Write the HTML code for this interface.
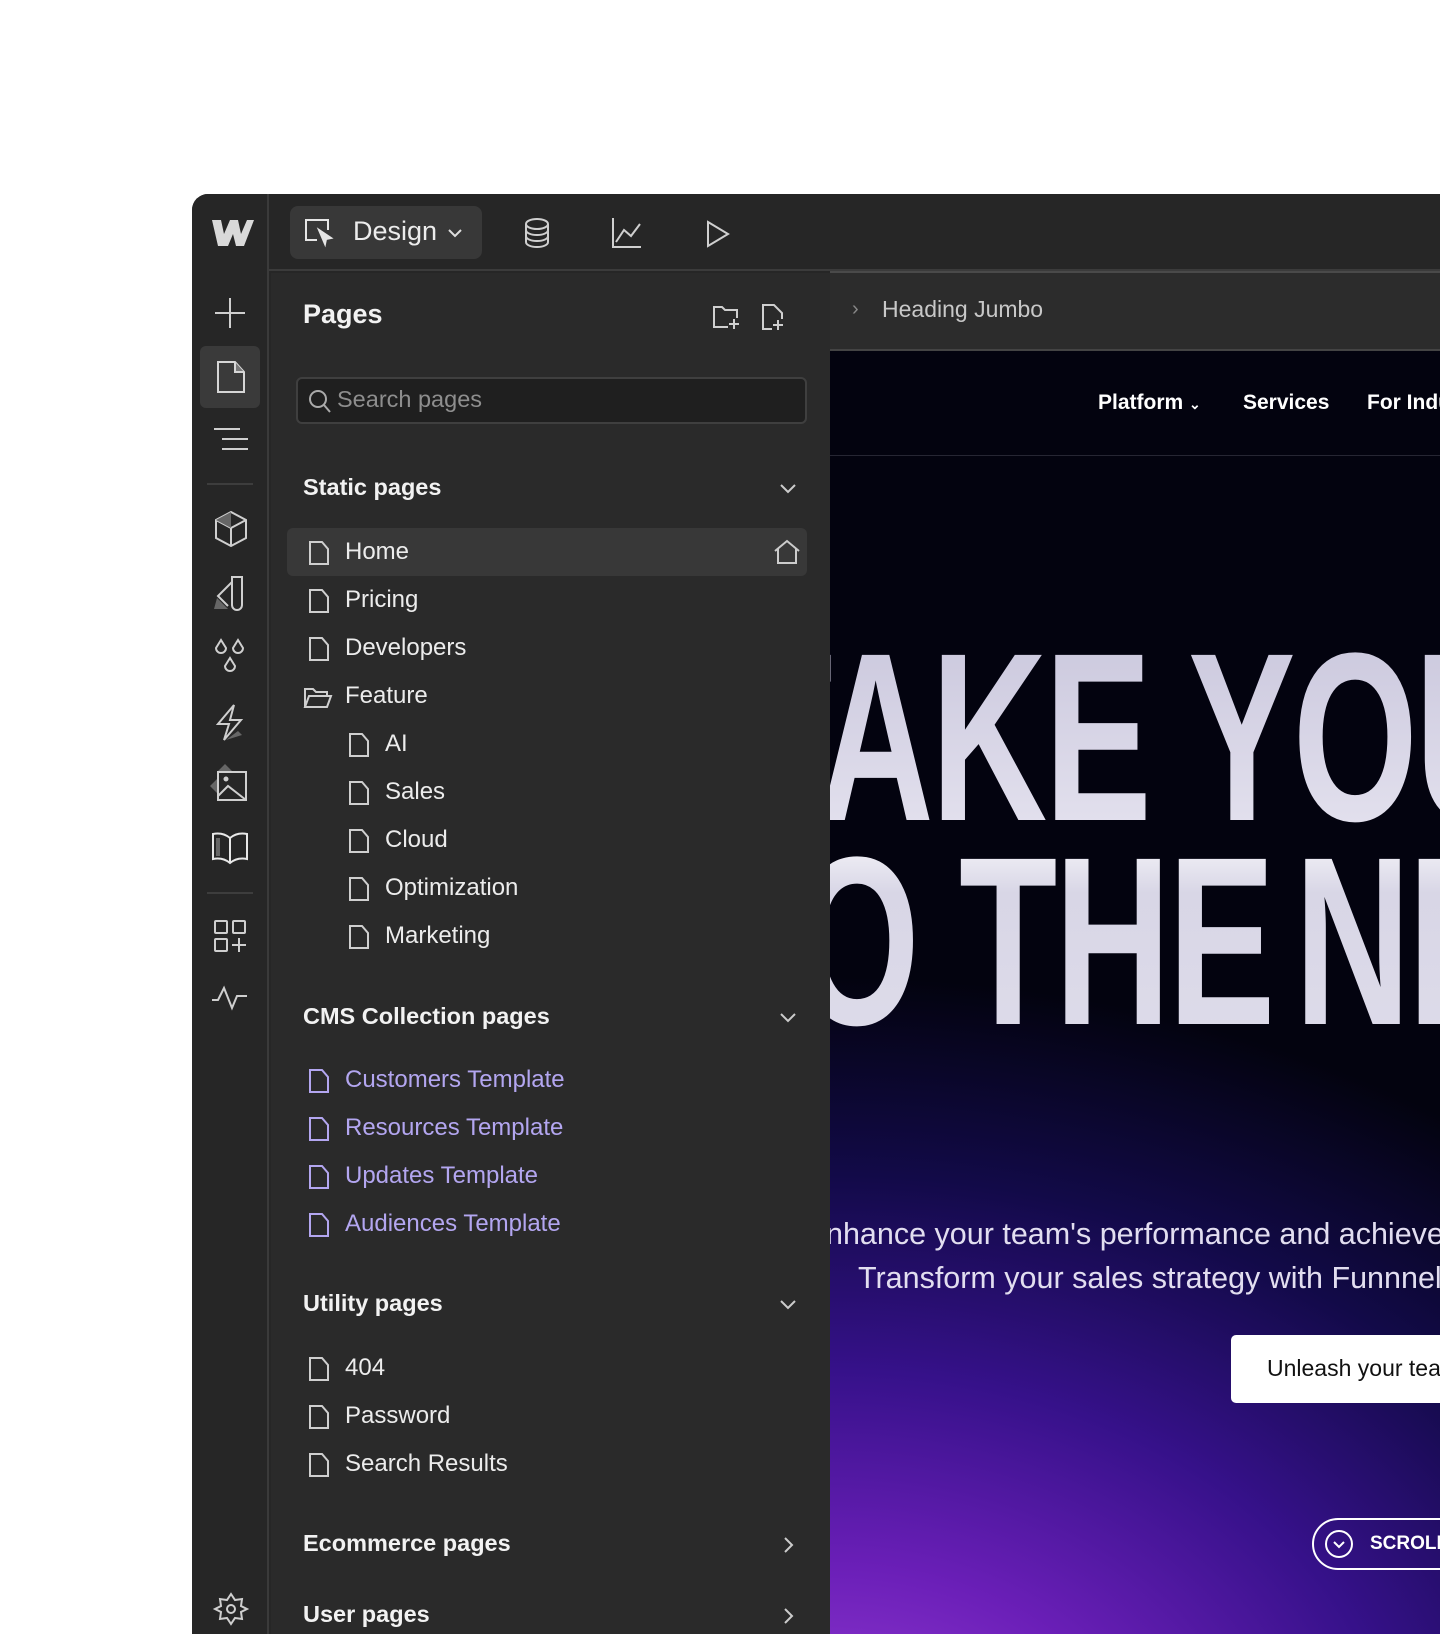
<!DOCTYPE html>
<html><head><meta charset="utf-8"><style>
*{margin:0;padding:0;box-sizing:border-box}
body{width:1440px;height:1621px;background:#fff;position:relative;overflow:hidden;font-family:"Liberation Sans",sans-serif}
.frame{position:absolute;left:192px;top:194px;width:1260px;height:1440px;background:#262626;border-radius:16px 0 0 0;overflow:hidden}
.abs{position:absolute}
.rail{position:absolute;left:0;top:0;width:77px;height:100%;background:#262626;border-right:2px solid #3a3a3a}
.topbar{position:absolute;left:77px;top:0;right:0;height:77px;background:#262626;border-bottom:2px solid #3b3b3b}
.panel{position:absolute;left:79px;top:79px;width:559px;height:1400px;background:#2a2a2a}
.preview{position:absolute;left:638px;top:77px;right:0;bottom:0;overflow:hidden;background:#03030f}
svg{position:absolute;overflow:visible}
.t{position:absolute;color:#ececec;font-size:24px;white-space:nowrap}
.h{position:absolute;color:#f2f2f2;font-size:23.5px;font-weight:bold;white-space:nowrap}
</style></head><body>
<div class="frame">
 <div class="rail">
  <svg style="left:22px;top:103px" width="32" height="32" fill="none" stroke="#cfcfcf" stroke-width="2"><path d="M16 1v30M1 16h30"/></svg>
  <div class="abs" style="left:8px;top:152px;width:60px;height:62px;background:#3a3a3a;border-radius:6px"></div>
  <svg style="left:24px;top:166px" width="30" height="34" fill="none" stroke="#d6d6d6" stroke-width="2"><path d="M2 2h17l9 10v20H2z"/><path d="M19 2v10h9" fill="#777"/></svg>
  <svg style="left:22px;top:234px" width="36" height="22" fill="none" stroke="#cfcfcf" stroke-width="2"><path d="M0 1h26M8 11h26M8 21h26"/></svg>
  <div class="abs" style="left:15px;top:289px;width:46px;height:2px;background:#3d3d3d"></div>
  <svg style="left:22px;top:317px" width="34" height="36" fill="none" stroke="#cfcfcf" stroke-width="2"><path d="M17 1L32 9v18L17 35 2 27V9zM2 9l15 8 15-8M17 17v18"/><path d="M2 9l15 8v-16z" fill="#666" stroke="none"/></svg>
  <svg style="left:22px;top:380px" width="34" height="36" fill="none" stroke="#cfcfcf" stroke-width="2"><path d="M18 3h10v28a4 4 0 0 1-10 0z"/><path d="M18 8L4 22l10 10" /><path d="M0 35h14L3 24z" fill="#666" stroke="none"/></svg>
  <svg style="left:21px;top:445px" width="34" height="36" fill="none" stroke="#cfcfcf" stroke-width="2"><path d="M8 1l5 8a5 5 0 1 1-10 0zM25 1l5 8a5 5 0 1 1-10 0zM17 19l5 8a5 5 0 1 1-10 0z"/></svg>
  <svg style="left:22px;top:510px" width="34" height="38" fill="none" stroke="#cfcfcf" stroke-width="2"><path d="M20 1L4 20h11l-5 16 17-20H16z"/><path d="M12 36l16-5-4-4z" fill="#666" stroke="none"/></svg>
  <svg style="left:18px;top:570px" width="38" height="38" fill="none" stroke="#cfcfcf" stroke-width="2"><rect x="8" y="8" width="28" height="28"/><path d="M8 32l10-10 18 14"/><circle cx="16" cy="15" r="1.5" fill="#cfcfcf"/><path d="M0 22l7-7v14zM15 0l7 7H8z" fill="#666" stroke="none"/></svg>
  <svg style="left:20px;top:638px" width="36" height="32" fill="none" stroke="#e8e8e8" stroke-width="2"><path d="M18 6C12 1 6 1 1 2v25c5-1 11-1 17 4 6-5 12-5 17-4V2c-5-1-11-1-17 4zM18 6v25"/><rect x="4" y="6" width="4" height="18" fill="#666" stroke="none"/></svg>
  <div class="abs" style="left:15px;top:698px;width:46px;height:2px;background:#3d3d3d"></div>
  <svg style="left:22px;top:726px" width="32" height="32" fill="none" stroke="#cfcfcf" stroke-width="2"><rect x="1" y="1" width="12" height="12" rx="1"/><rect x="19" y="1" width="12" height="12" rx="1"/><rect x="1" y="19" width="12" height="12" rx="1"/><path d="M25 18v14M18 25h14"/></svg>
  <svg style="left:20px;top:792px" width="36" height="24" fill="none" stroke="#cfcfcf" stroke-width="2"><path d="M0 14h6l6-12 8 20 5-12h10"/></svg>
  <svg style="left:22px;top:1398px" width="34" height="34" fill="none" stroke="#cfcfcf" stroke-width="2"><path d="M17 2l4 6 7-1-1 7 6 3-6 3 1 7-7-1-4 6-4-6-7 1 1-7-6-3 6-3-1-7 7 1z"/><circle cx="17" cy="17" r="4"/></svg>
  <svg style="left:20px;top:26px" width="42" height="26"><path d="M0 0h9l3 14 6-14h8l3 14 6-14h7l-10 26h-8l-3-12-5 12H6z" fill="#d9d9d9"/></svg>
 </div>
 <div class="topbar">
  <div class="abs" style="left:21px;top:12px;width:192px;height:53px;background:#383838;border-radius:8px"></div>
  <svg style="left:35px;top:24px" width="32" height="30" fill="none" stroke="#e6e6e6" stroke-width="2"><path d="M13 22H2V2h22v10"/><path d="M15 12l12 8-5 1-1 5z" fill="#e6e6e6"/></svg>
  <div class="t" style="left:84px;top:22px;font-size:27px;color:#ececec">Design</div>
  <svg style="left:179px;top:35px" width="14" height="9" fill="none" stroke="#ddd" stroke-width="2"><path d="M1 1l6 6 6-6"/></svg>
  <svg style="left:255px;top:24px" width="26" height="30" fill="none" stroke="#cfcfcf" stroke-width="2"><ellipse cx="13" cy="6" rx="11" ry="5"/><path d="M2 6v18c0 3 5 5 11 5s11-2 11-5V6M2 12c0 3 5 5 11 5s11-2 11-5M2 18c0 3 5 5 11 5s11-2 11-5"/></svg>
  <svg style="left:343px;top:24px" width="30" height="30" fill="none" stroke="#cfcfcf" stroke-width="2"><path d="M1 0v29h28M4 24l8-12 7 6 9-12"/></svg>
  <svg style="left:437px;top:26px" width="24" height="28" fill="none" stroke="#cfcfcf" stroke-width="2"><path d="M2 2l20 12L2 26z"/></svg>
 </div>
 <div class="panel">
  <div class="h" style="left:32px;top:26px;font-size:27px">Pages</div>
  <svg style="left:442px;top:33px" width="28" height="24" fill="none" stroke="#cfcfcf" stroke-width="2"><path d="M15 21H1V1h8l3 3h12v8"/><path d="M21 13v10M16 18h10"/></svg>
  <svg style="left:491px;top:31px" width="24" height="28" fill="none" stroke="#cfcfcf" stroke-width="2"><path d="M10 25H1V1h11l8 8v6"/><path d="M16 16v10M11 21h10"/></svg>
  <div class="abs" style="left:25px;top:104px;width:511px;height:47px;border:2px solid #3f3f3f;border-radius:6px;background:#1f1f1f"></div>
  <svg style="left:38px;top:117px" width="22" height="24" fill="none" stroke="#aaa" stroke-width="2"><circle cx="9" cy="9" r="8"/><path d="M15 15l6 7"/></svg>
  <div class="t" style="left:66px;top:113px;color:#8e8e8e;font-size:23.5px">Search pages</div>
  <div class="abs" style="left:16px;top:255px;width:520px;height:48px;background:#383838;border-radius:6px"></div>
  <svg style="left:502px;top:266px" width="28" height="26" fill="none" stroke="#ccc" stroke-width="2"><path d="M2 12L14 2l12 10M5 10v14h18V10"/></svg>
  <div id="items"></div>
 </div>
 <div class="preview">
  <div class="abs" style="left:0;top:0;width:100%;height:100%;background:radial-gradient(ellipse 1100px 820px at 0% 112%,#a044dc 0%,#6b1fb8 28%,#36118a 52%,#120a48 76%,rgba(3,3,15,0) 100%)"></div>
  <div class="abs" style="left:0;top:0;width:100%;height:80px;background:#2c2c2c;border-top:2px solid #4a4a4a;border-bottom:2px solid #444"></div>
  <div class="t" style="left:22px;top:27px;color:#888;font-size:20px">›</div>
  <div class="t" style="left:52px;top:25px;color:#c8c8c8;font-size:23px">Heading Jumbo</div>
  <div class="abs" style="left:0;top:184px;width:100%;height:1px;background:#262633"></div>
  <div class="t" style="left:268px;top:120px;font-size:21px;font-weight:bold;color:#fff">Platform <span style="font-size:14px">⌄</span></div>
  <div class="t" style="left:413px;top:120px;font-size:21px;font-weight:bold;color:#fff">Services</div>
  <div class="t" style="left:537px;top:120px;font-size:21px;font-weight:bold;color:#fff">For Industries</div>
  <div class="abs" style="left:-96px;top:346px;font-size:240px;line-height:240px;font-weight:bold;letter-spacing:-4px;transform:scaleX(0.67);transform-origin:0 0;white-space:nowrap;background:linear-gradient(#c9c6dc,#e6e4f0);-webkit-background-clip:text;color:transparent">TAKE YOUR</div>
  <div class="abs" style="left:-128px;top:550px;font-size:240px;line-height:240px;font-weight:bold;letter-spacing:-4px;transform:scaleX(0.67);transform-origin:0 0;white-space:nowrap;background:linear-gradient(#ffffff 0%,#d8d6e6 30%,#dedcea 100%);-webkit-background-clip:text;color:transparent">TO THE <span style="margin-left:-30px">NEXT</span></div>
  <div class="t" style="left:-4px;top:946px;font-size:30.5px;color:#e2def0">nhance your team's performance and achieve</div>
  <div class="t" style="left:28px;top:990px;font-size:30.5px;color:#e2def0">Transform your sales strategy with Funnnel</div>
  <div class="abs" style="left:401px;top:1064px;width:260px;height:68px;background:#fff;border-radius:5px"></div>
  <div class="t" style="left:437px;top:1084px;font-size:23px;color:#111">Unleash your team</div>
  <div class="abs" style="left:482px;top:1247px;width:240px;height:52px;border:2px solid #fff;border-radius:26px"></div>
  <svg style="left:494px;top:1258px" width="30" height="30" fill="none" stroke="#fff" stroke-width="2"><circle cx="15" cy="15" r="13"/><path d="M10 13l5 5 5-5"/></svg>
  <div class="t" style="left:540px;top:1262px;font-size:19px;font-weight:bold;color:#fff">SCROLL</div>
 </div>
</div>
<script>
var items=[
["Home",552,0,0],["Pricing",600,0,0],["Developers",648,0,0],["Feature",696,0,2],["AI",744,1,0],["Sales",792,1,0],["Cloud",840,1,0],["Optimization",888,1,0],["Marketing",936,1,0],
["Customers Template",1080,0,1],["Resources Template",1128,0,1],["Updates Template",1176,0,1],["Audiences Template",1224,0,1],
["404",1368,0,0],["Password",1416,0,0],["Search Results",1464,0,0]];
function Y(v){return v-272;}
var h='';
items.forEach(function(it){
 var y=Y(it[1]), x=it[2]?78:38, c=it[3]==1?'#b3a6f0':'#ececec', ic=it[3]==1?'#b3a6f0':'#cfcfcf';
 if(it[3]==2) h+='<svg style="left:'+(x-6)+'px;top:'+(y-10)+'px" width="30" height="22" fill="none" stroke="'+ic+'" stroke-width="2"><path d="M2 20V2h8l3 3h11v4M2 20l4-11h22l-4 11z"/></svg>';
 else h+='<svg style="left:'+x+'px;top:'+(y-12)+'px" width="20" height="24" fill="none" stroke="'+ic+'" stroke-width="2"><path d="M1 1h12l6 7v15H1z"/></svg>';
 h+='<div class="t" style="left:'+(x+36)+'px;top:'+(y-15)+'px;color:'+c+'">'+it[0]+'</div>';
});
var heads=[["Static pages",488,0],["CMS Collection pages",1017,0],["Utility pages",1304,0],["Ecommerce pages",1544,1],["User pages",1615,1]];
heads.forEach(function(hd){var y=Y(hd[1]);
 h+='<div class="h" style="left:32px;top:'+(y-15)+'px">'+hd[0]+'</div>';
 h+= hd[2]?'<svg style="left:513px;top:'+(y-8)+'px" width="10" height="16" fill="none" stroke="#ccc" stroke-width="2"><path d="M1 1l7 7-7 7"/></svg>':'<svg style="left:509px;top:'+(y-5)+'px" width="16" height="10" fill="none" stroke="#ccc" stroke-width="2"><path d="M1 1l7 7 7-7"/></svg>';
});
document.getElementById('items').outerHTML=h;
</script>
</body></html>
